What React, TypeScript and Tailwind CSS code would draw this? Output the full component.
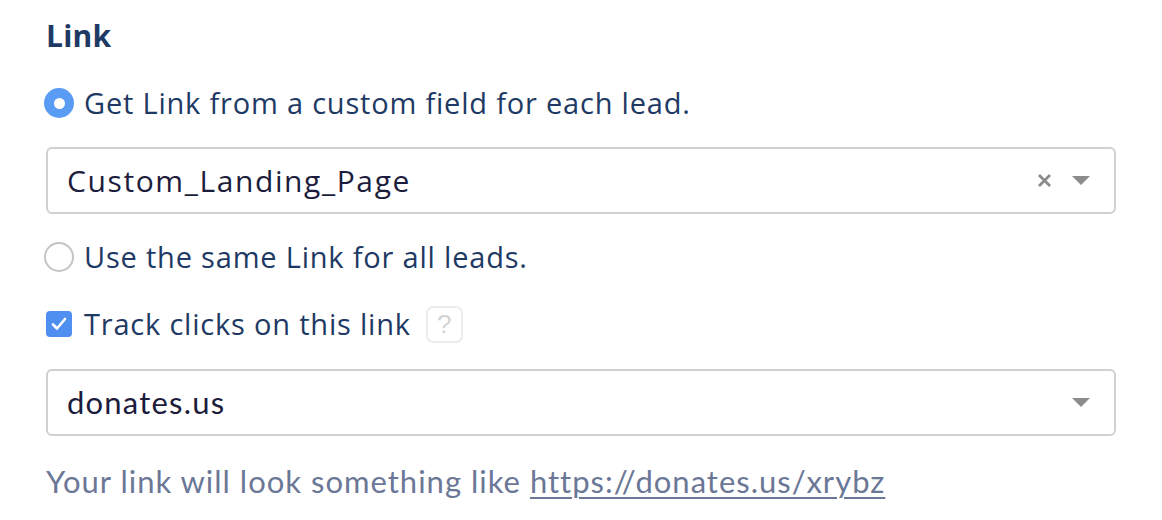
export default function App() {
  return (
    <div className="w-[1162px] h-[520px] bg-white font-['Open_Sans',sans-serif] text-[#1e3a64] pl-[46px] pr-[46px] pt-[16px]">
      <h3 className="text-[30px] font-bold leading-[40px] tracking-[0.2px]">Link</h3>

      <label className="flex items-center mt-[27px] h-[40px]">
        <span className="w-[30px] h-[30px] -ml-[2px] rounded-full bg-[#5a9cf3] flex items-center justify-center shrink-0">
          <span className="w-[11px] h-[11px] rounded-full bg-white" />
        </span>
        <span className="ml-[10px] text-[29px] leading-[40px] tracking-[0.8px]">Get Link from a custom field for each lead.</span>
      </label>

      <div className="mt-[24px] h-[67px] rounded-[6px] border-2 border-[#d0d0d0] flex items-center pl-[19px] pr-[24px]">
        <span className="flex-1 text-[30px] text-[#1c1c3c] tracking-[1.6px]">Custom_Landing_Page</span>
        <svg width="15" height="15" viewBox="0 0 15 15" className="mr-[20px]">
          <path d="M2 2L13 13M13 2L2 13" stroke="#8a8a8a" strokeWidth="2.8" />
        </svg>
        <svg width="18" height="10" viewBox="0 0 18 10">
          <path d="M0 0H18L9 9Z" fill="#8c8c8c" />
        </svg>
      </div>

      <label className="flex items-center mt-[23px] h-[40px]">
        <span className="w-[30px] h-[30px] -ml-[2px] rounded-full border-2 border-[#c4c4c4] bg-white shrink-0" />
        <span className="ml-[10px] text-[29px] leading-[40px] tracking-[0.8px]">Use the same Link for all leads.</span>
      </label>

      <label className="flex items-center mt-[27px] h-[40px]">
        <span className="w-[26px] h-[26px] rounded-[4px] bg-[#4e8ff0] flex items-center justify-center shrink-0">
          <svg width="16" height="14" viewBox="0 0 16 14">
            <path d="M2 7.5L6 11.5L14 2" stroke="white" strokeWidth="2.6" fill="none" strokeLinecap="round" strokeLinejoin="round" />
          </svg>
        </span>
        <span className="ml-[12px] text-[29px] leading-[40px] tracking-[0.8px]">Track clicks on this link</span>
        <span className="ml-[15px] w-[37px] h-[37px] rounded-[7px] border-2 border-[#ececec] flex items-center justify-center text-[26px] leading-none text-[#d4d4d4] font-['Liberation_Sans',sans-serif]">?</span>
      </label>

      <div className="mt-[25px] h-[67px] rounded-[6px] border-2 border-[#d0d0d0] flex items-center pl-[19px] pr-[24px]">
        <span className="flex-1 font-['Lato',sans-serif] text-[31px] text-[#1c1c3c] tracking-[1.2px]">donates.us</span>
        <svg width="18" height="10" viewBox="0 0 18 10">
          <path d="M0 0H18L9 9Z" fill="#8c8c8c" />
        </svg>
      </div>

      <p className="mt-[25px] font-['Lato',sans-serif] text-[31px] leading-[40px] tracking-[1px] text-[#6b7796]">
        Your link will look something like <a className="underline underline-offset-[4px] decoration-2">https://donates.us/xrybz</a>
      </p>
    </div>
  );
}
